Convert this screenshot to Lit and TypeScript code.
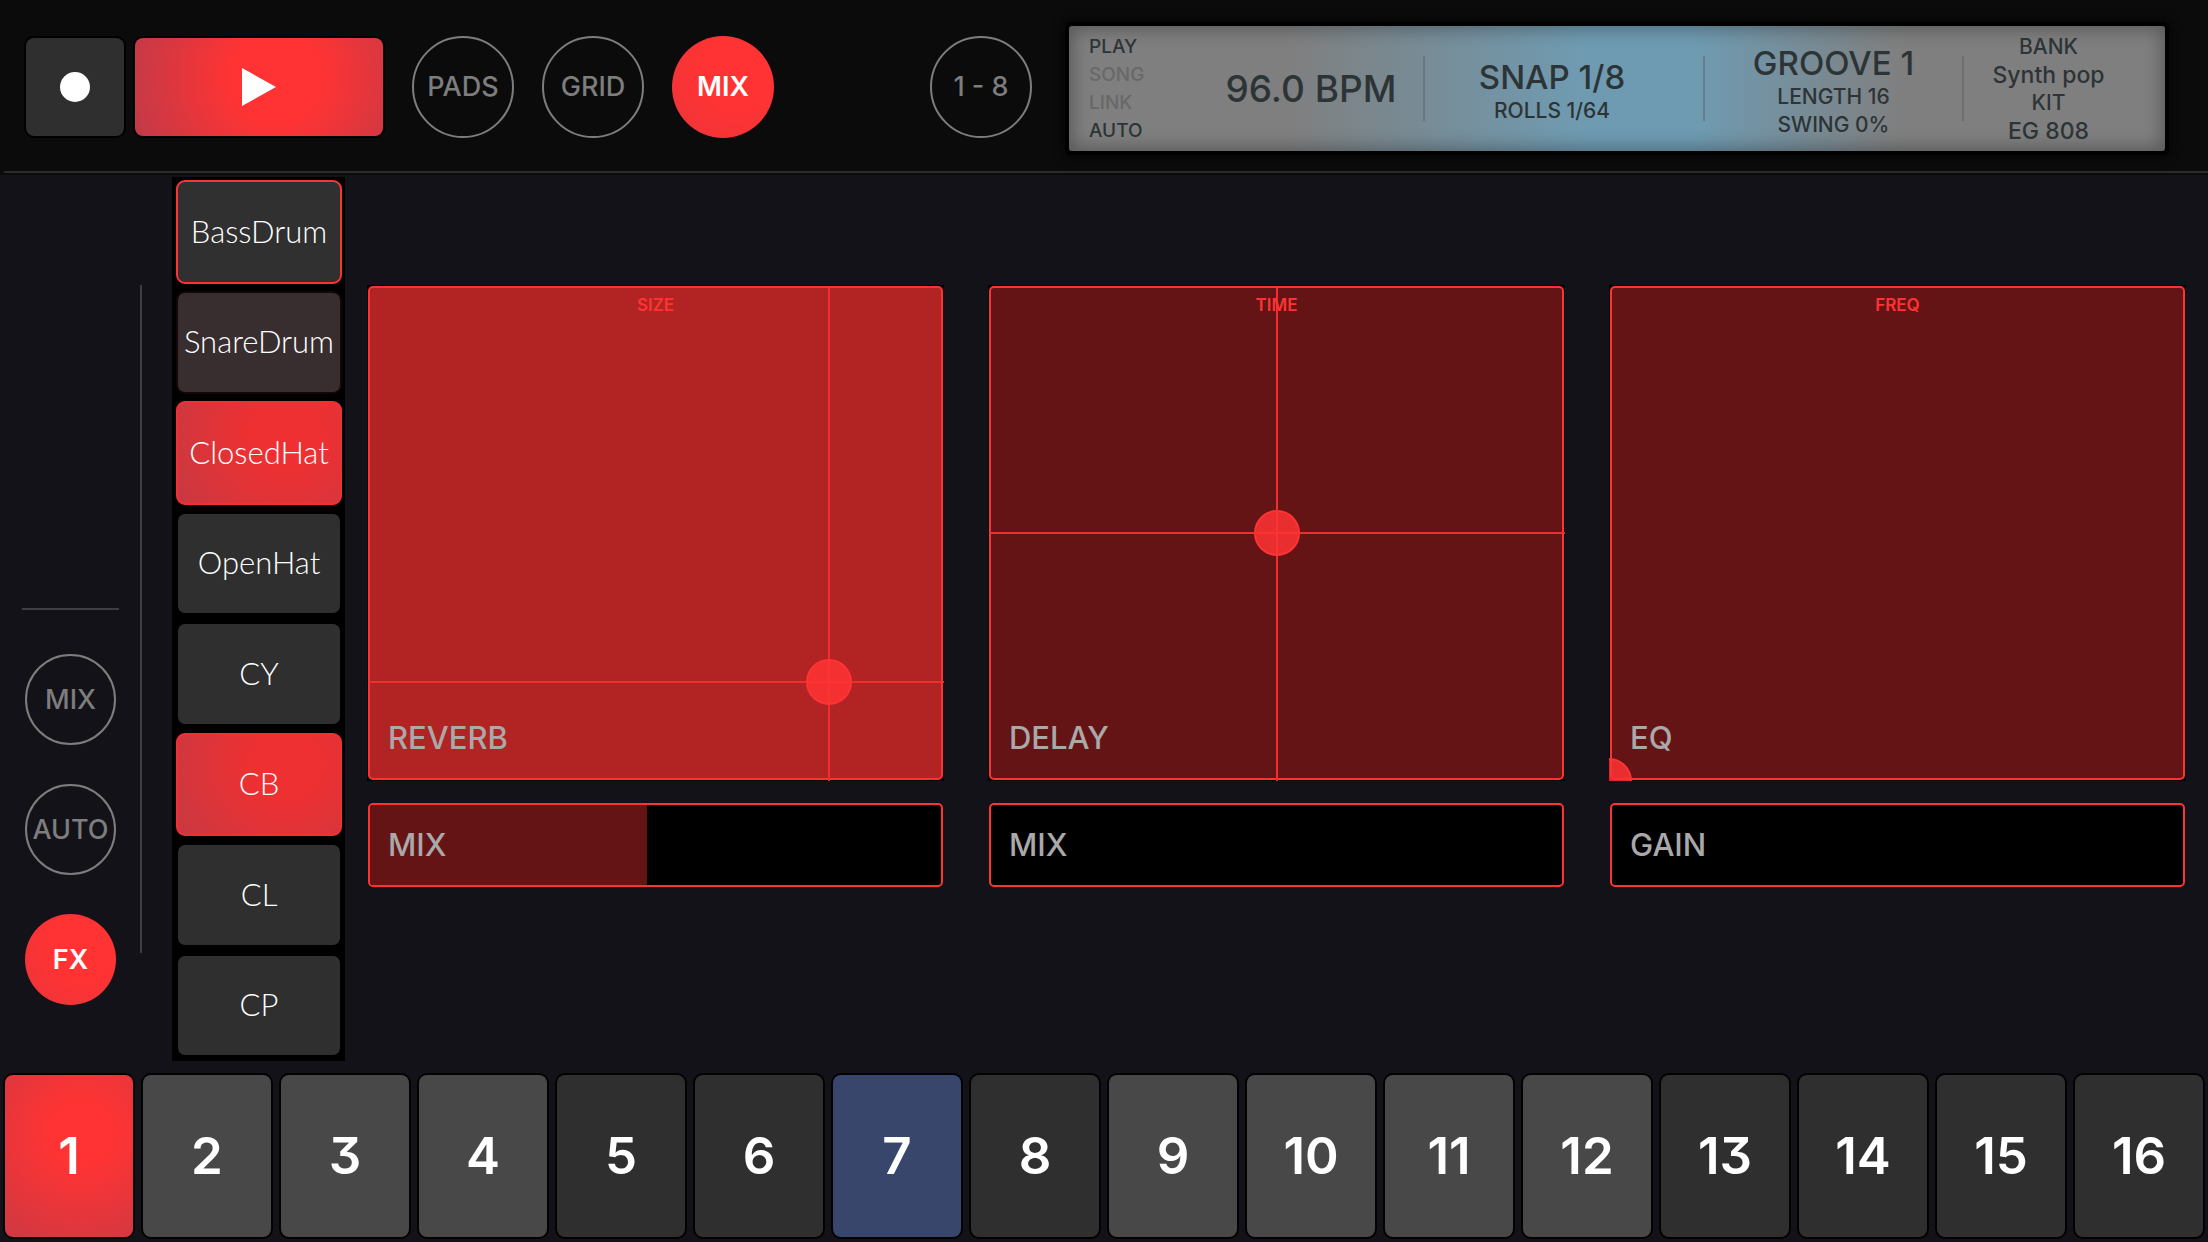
import { LitElement, html, css, svg } from "lit";
import { customElement, property, state } from "lit/decorators.js";
import { classMap } from "lit/directives/class-map.js";
import { styleMap } from "lit/directives/style-map.js";

interface Pad {
  name: string;
  look: "plain" | "selected" | "muted" | "lit";
}

interface Effect {
  name: string;
  axis: string;
  x: number;
  y: number;
  bright: boolean;
  amountLabel: string;
  amount: number;
}

const PADS: Pad[] = [
  { name: "BassDrum", look: "selected" },
  { name: "SnareDrum", look: "muted" },
  { name: "ClosedHat", look: "lit" },
  { name: "OpenHat", look: "plain" },
  { name: "CY", look: "plain" },
  { name: "CB", look: "lit" },
  { name: "CL", look: "plain" },
  { name: "CP", look: "plain" },
];

const EFFECTS: Effect[] = [
  { name: "REVERB", axis: "SIZE", x: 80, y: 20, bright: true, amountLabel: "MIX", amount: 48.5 },
  { name: "DELAY", axis: "TIME", x: 50, y: 50, bright: false, amountLabel: "MIX", amount: 0 },
  { name: "EQ", axis: "FREQ", x: 0, y: 0, bright: false, amountLabel: "GAIN", amount: 0 },
];

/** Round toggle used in the top bar and in the side rail. */
@customElement("round-toggle")
class RoundToggle extends LitElement {
  static styles = css`
    :host {
      display: block;
    }
    .toggle {
      display: grid;
      place-items: center;
      box-sizing: border-box;
      width: var(--toggle-size, 102px);
      height: var(--toggle-size, 102px);
      margin: 0;
      padding: 0;
      border: 2px solid #7d7d7d;
      border-radius: 50%;
      background: transparent;
      color: #7d7d7d;
      font: 500 27px/32px Inter, "Liberation Sans", sans-serif;
      white-space: nowrap;
      cursor: pointer;
    }
    .on {
      border: 0;
      background: radial-gradient(circle at 64% 36%, #ff3333 40%, #ea343a 100%);
      color: #fff;
      font-weight: 600;
    }
  `;

  @property() label = "";
  @property({ type: Boolean }) on = false;

  render() {
    return html`<button
      class=${classMap({ toggle: true, on: this.on })}
      aria-pressed=${this.on ? "true" : "false"}
    >
      ${this.label}
    </button>`;
  }
}

/** Two-axis touch surface with a cross-hair, and its amount slider below. */
@customElement("effect-panel")
class EffectPanel extends LitElement {
  static styles = css`
    :host {
      display: grid;
      grid-template-rows: minmax(200px, 1fr) 86px;
      gap: 21px;
      min-width: 0;
      font-family: Inter, "Liberation Sans", sans-serif;
    }
    .surface {
      position: relative;
      display: flex;
      overflow: hidden;
      background: #000;
      cursor: crosshair;
      touch-action: none;
    }
    .face {
      flex: 1;
      display: flex;
      flex-direction: column;
      justify-content: space-between;
      margin: 1px;
      padding: 7px 18px 22px;
      border: 2px solid #ff3333;
      border-radius: 5px;
      background: #651416;
    }
    .face.bright {
      background: #b22323;
    }
    .axis {
      z-index: 1;
      text-align: center;
      font-size: 17px;
      line-height: 20px;
      font-weight: 600;
      color: #ff3333;
    }
    .name {
      font-size: 31px;
      line-height: 36px;
      font-weight: 500;
      color: #a9a9a9;
    }
    .line-x,
    .line-y,
    .ball {
      position: absolute;
      pointer-events: none;
    }
    .line-x {
      top: 2px;
      bottom: 0;
      width: 2px;
      margin-left: -1px;
      background: #ee2e2f;
    }
    .line-y {
      left: 2px;
      right: 0;
      height: 2px;
      margin-top: -1px;
      background: #ee2e2f;
    }
    .ball {
      box-sizing: border-box;
      width: 46px;
      height: 46px;
      margin: -23px 0 0 -23px;
      border: 2px solid #ff3333;
      border-radius: 50%;
      background: rgba(255, 51, 51, 0.85);
    }
    .amount {
      display: grid;
      align-items: center;
      margin: 1px;
      border: 2px solid #ff3333;
      border-radius: 5px;
      overflow: hidden;
      background: #000;
    }
    .amount-label,
    .slider {
      grid-area: 1 / 1;
    }
    .amount-label {
      z-index: 1;
      padding-left: 18px;
      font-size: 31px;
      line-height: 36px;
      font-weight: 500;
      color: #a9a9a9;
      pointer-events: none;
    }
    .slider {
      appearance: none;
      width: 100%;
      height: 100%;
      margin: 0;
      background: linear-gradient(#651416, #651416) 0 0 / var(--fill) 100% no-repeat;
      cursor: ew-resize;
    }
    .slider::-webkit-slider-thumb {
      appearance: none;
      width: 1px;
      height: 80px;
      background: transparent;
    }
  `;

  @property({ attribute: false }) effect: Effect = EFFECTS[0];
  @state() private x = 0;
  @state() private y = 0;
  @state() private amount = 0;

  willUpdate(changed: Map<string, unknown>) {
    if (changed.has("effect")) {
      this.x = this.effect.x;
      this.y = this.effect.y;
      this.amount = this.effect.amount;
    }
  }

  private drag(e: PointerEvent) {
    if (!e.buttons) return;
    const box = (e.currentTarget as HTMLElement).getBoundingClientRect();
    const clamp = (v: number) => Math.min(100, Math.max(0, v));
    this.x = clamp(((e.clientX - box.left) / box.width) * 100);
    this.y = clamp(((box.bottom - e.clientY) / box.height) * 100);
  }

  render() {
    const { name, axis, bright, amountLabel } = this.effect;
    const left = `${this.x}%`;
    const top = `${100 - this.y}%`;
    const centred = this.x > 0 || this.y > 0;
    return html`
      <div
        class="surface"
        role="group"
        aria-label=${name}
        @pointerdown=${this.drag}
        @pointermove=${this.drag}
      >
        <div class=${classMap({ face: true, bright })}>
          <span class="axis">${axis}</span>
          <span class="name">${name}</span>
        </div>
        ${centred
          ? html`<div class="line-x" style=${styleMap({ left })}></div>
              <div class="line-y" style=${styleMap({ top })}></div>`
          : ""}
        <div class="ball" style=${styleMap({ left, top })}></div>
      </div>
      <label class="amount">
        <span class="amount-label">${amountLabel}</span>
        <input
          class="slider"
          type="range"
          min="0"
          max="100"
          step="any"
          .value=${String(this.amount)}
          style=${styleMap({ "--fill": `${this.amount}%` })}
          @input=${(e: Event) => (this.amount = Number((e.target as HTMLInputElement).value))}
        />
      </label>
    `;
  }
}

/** Status display on the right of the top bar. */
@customElement("status-display")
class StatusDisplay extends LitElement {
  static styles = css`
    :host {
      display: block;
      min-width: 0;
      padding: 4px;
      border-radius: 6px;
      background: #000;
      box-shadow: 0 0 10px 4px rgba(0, 0, 0, 0.45);
    }
    .screen {
      display: grid;
      grid-template-columns: 130fr 226fr 280fr 259fr 201fr;
      align-items: center;
      height: 125px;
      border-radius: 3px;
      background: linear-gradient(
        90deg,
        #7f7f7f 0%,
        #7f7f7f 20%,
        #6f9bb2 47%,
        #6f9bb2 57%,
        #7f7f7f 76%,
        #7f7f7f 100%
      );
      box-shadow: inset 0 0 18px 3px rgba(0, 0, 0, 0.32);
      color: #2d3436;
      font: 500 21px/28px Inter, "Liberation Sans", sans-serif;
      white-space: nowrap;
    }
    .modes {
      display: grid;
      padding-left: 20px;
      font-size: 19px;
    }
    .off {
      color: #686868;
    }
    .cell {
      display: flex;
      flex-direction: column;
      justify-content: center;
      align-items: center;
    }
    .ruled {
      height: 65px;
      border-right: 2px solid rgba(60, 70, 75, 0.28);
    }
    .snap {
      padding-right: 24px;
    }
    .bank {
      padding-right: 32px;
    }
    .tempo {
      font-size: 37px;
      line-height: 40px;
    }
    .big {
      padding-top: 4px;
      font-size: 33px;
      line-height: 40px;
    }
    .text {
      font-size: 23px;
    }
  `;

  render() {
    return html`
      <div class="screen">
        <div class="modes">
          <span>PLAY</span>
          <span class="off">SONG</span>
          <span class="off">LINK</span>
          <span>AUTO</span>
        </div>
        <div class="cell ruled"><span class="tempo">96.0 BPM</span></div>
        <div class="cell ruled snap">
          <span class="big">SNAP 1/8</span>
          <span>ROLLS 1/64</span>
        </div>
        <div class="cell ruled">
          <span class="big">GROOVE 1</span>
          <span>LENGTH 16</span>
          <span>SWING 0%</span>
        </div>
        <div class="cell bank">
          <span>BANK</span>
          <span class="text">Synth pop</span>
          <span>KIT</span>
          <span class="text">EG 808</span>
        </div>
      </div>
    `;
  }
}

@customElement("app-root")
class AppRoot extends LitElement {
  static styles = css`
    :host {
      display: flex;
      flex-direction: column;
      min-height: 100vh;
      background: #131218;
      color: #fff;
      font-family: Inter, "Liberation Sans", sans-serif;
      --glow: radial-gradient(circle at 60% 36%, #ff3333 30px, #c43a46 150px);
    }
    .top {
      display: flex;
      align-items: center;
      padding: 22px 39px 16px 26px;
      background: #0b0b0b;
    }
    .rule {
      height: 2px;
      padding-bottom: 2px;
      background: #0b0b0b;
      border: 0;
      margin: 0;
    }
    .rule::before {
      content: "";
      display: block;
      height: 2px;
      margin-left: 4px;
      background: #2b2b2b;
    }
    .transport,
    .views {
      display: flex;
      align-items: center;
      padding-bottom: 4px;
    }
    .transport {
      gap: 11px;
    }
    .views {
      gap: 28px;
      margin-left: 29px;
    }
    .page {
      margin-left: 156px;
      padding-bottom: 4px;
    }
    .display {
      flex: 1;
      margin-left: 33px;
    }
    .key {
      display: grid;
      place-items: center;
      box-sizing: border-box;
      height: 98px;
      margin: 0;
      padding: 0;
      border: 0;
      border-radius: 8px;
      background: #2e2f2e;
      box-shadow: 0 0 0 2px #000;
      cursor: pointer;
    }
    .record {
      width: 98px;
    }
    .play {
      width: 248px;
      background: radial-gradient(circle at 57% 40%, #ff3333 45px, #c23a48 150px);
    }
    .key svg {
      display: block;
    }
    .main {
      flex: 1;
      display: grid;
      grid-template-columns: 140px 32px 173px minmax(0, 1fr);
    }
    .side {
      display: flex;
      flex-direction: column;
      justify-content: flex-end;
      gap: 39px;
      padding: 0 24px 64px 25px;
      --toggle-size: 91px;
    }
    .side-rule {
      width: 97px;
      height: 2px;
      margin: 0 0 5px -3px;
      border: 0;
      background: #3f3f42;
    }
    .divider {
      width: 2px;
      margin: 110px 0 116px;
      background: #3f3f42;
    }
    .strip {
      display: grid;
      grid-template-rows: repeat(8, 1fr);
      margin: 2px 0 8px;
      background: #000;
    }
    .pad {
      margin: 3px 3px 4px 4px;
      padding: 0 0 2px;
      border: 2px solid #000;
      border-radius: 9px;
      background: #2e2f2e;
      color: #fff;
      font: 300 31px/36px Lato, "Liberation Sans", sans-serif;
      cursor: pointer;
    }
    .pad.selected {
      border-color: #ff3333;
      background: #303030;
    }
    .pad.muted {
      border-color: #120607;
      background: #382d2f;
    }
    .pad.lit {
      border-color: #f03033;
      background: radial-gradient(circle at 66% 30%, #ee3032 34px, #c23a44 145px) border-box;
    }
    .effects {
      display: grid;
      grid-template-columns: repeat(3, minmax(0, 1fr));
      gap: 44px;
      padding: 110px 22px 181px;
    }
    .steps {
      display: grid;
      grid-template-columns: repeat(16, minmax(0, 1fr));
      gap: 10px;
      padding: 6px 5px 5px;
    }
    .step {
      height: 162px;
      margin: 0;
      padding: 0;
      border: 0;
      border-radius: 8px;
      background: #2e2f2e;
      box-shadow: 0 0 0 2px #020203;
      color: #fff;
      font: 600 51px/60px Inter, "Liberation Sans", sans-serif;
      font-feature-settings: "cv09";
      cursor: pointer;
    }
    .step.raised {
      background: #484848;
    }
    .step.cue {
      background: #38466c;
    }
    .step.active {
      background: var(--glow);
    }
  `;

  @state() private view = "MIX";
  @state() private section = "FX";
  @state() private step = 1;

  private stepClasses(n: number) {
    return classMap({
      step: true,
      raised: (n > 1 && n < 5) || (n > 8 && n < 13),
      cue: n === 7,
      active: n === this.step,
    });
  }

  render() {
    const steps = Array.from({ length: 16 }, (_, i) => i + 1);
    return html`
      <header class="top">
        <div class="transport">
          <button class="key record" aria-label="Record">
            <svg width="30" height="30" viewBox="0 0 30 30">
              ${svg`<circle cx="15" cy="15" r="15" fill="#fff"></circle>`}
            </svg>
          </button>
          <button class="key play" aria-label="Play">
            <svg width="36" height="38" viewBox="0 0 36 38">
              ${svg`<path d="M1 0L35 19L1 38Z" fill="#fff"></path>`}
            </svg>
          </button>
        </div>
        <nav class="views">
          ${["PADS", "GRID", "MIX"].map(
            (v) => html`<round-toggle
              .label=${v}
              .on=${this.view === v}
              @click=${() => (this.view = v)}
            ></round-toggle>`
          )}
        </nav>
        <div class="page"><round-toggle .label=${"1 - 8"}></round-toggle></div>
        <status-display class="display"></status-display>
      </header>
      <div class="rule"></div>
      <main class="main">
        <nav class="side">
          <hr class="side-rule" />
          ${["MIX", "AUTO", "FX"].map(
            (v) => html`<round-toggle
              .label=${v}
              .on=${this.section === v}
              @click=${() => (this.section = v)}
            ></round-toggle>`
          )}
        </nav>
        <div class="divider"></div>
        <div class="strip">
          ${PADS.map((p) => html`<button class="pad ${p.look}">${p.name}</button>`)}
        </div>
        <section class="effects">
          ${EFFECTS.map((e) => html`<effect-panel .effect=${e}></effect-panel>`)}
        </section>
      </main>
      <footer class="steps">
        ${steps.map(
          (n) => html`<button class=${this.stepClasses(n)} @click=${() => (this.step = n)}>
            ${n}
          </button>`
        )}
      </footer>
    `;
  }
}
